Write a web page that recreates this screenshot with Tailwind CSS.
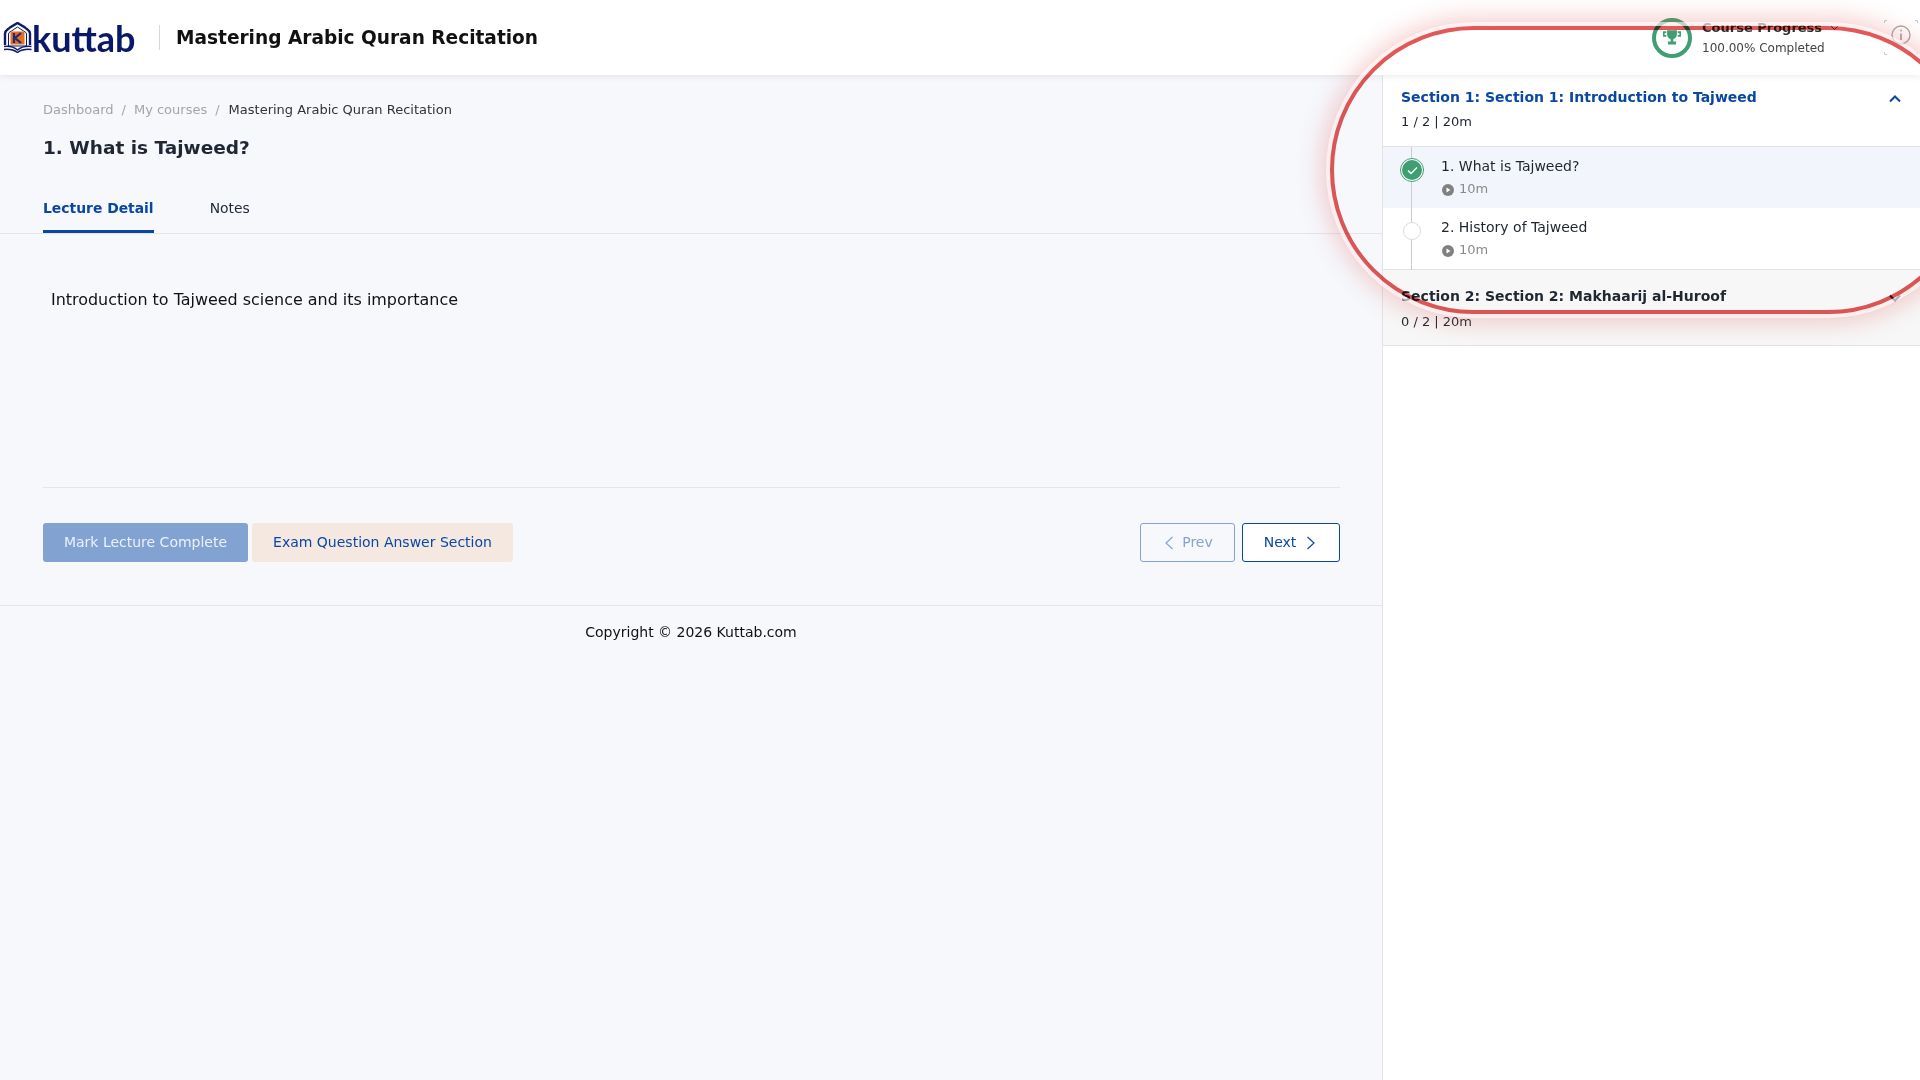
<!DOCTYPE html>
<html lang="en">
<head>
  <meta charset="UTF-8" />
  <title>Mastering Arabic Quran Recitation - Kuttab</title>
  <script src="https://cdn.jsdelivr.net/npm/@tailwindcss/browser@4"></script>
</head>
<body class="relative h-[1080px] overflow-hidden bg-[#f6f8fc] font-['DejaVu_Sans',sans-serif] text-[#1d2530]">
  <!-- top bar -->
  <header class="relative z-10 flex h-[75px] items-center bg-white pl-[3px] shadow-[0_2px_6px_rgba(0,0,0,0.07)]">
    <div class="flex w-[156px] items-center">
      <svg width="30" height="31" viewBox="0 0 30 31" class="shrink-0">
        <path d="M2 23V11.500C2 8.500 5 7.500 7 5.500L14.500 1L22 5.500C24 7.500 27 8.500 27 11.500V23" fill="none" stroke="#0d1b6b" stroke-width="2.400"/>
        <path d="M5.500 24V12C5.500 10 8 9.500 10 8L14.500 5L19 8C21 9.500 23.500 10 23.500 12V24Z" fill="#fff" stroke="#0d1b6b" stroke-width="1"/>
        <rect x="7.500" y="9.500" width="14" height="13" fill="#e2701f"/>
        <path d="M11 11V21M18 11L12 16L18 21" fill="none" stroke="#1d2a7a" stroke-width="2.200"/>
        <path d="M1 24.500C6 24 11 25 14.500 28C18 25 23 24 28.500 24.500M1 27.500C6 27 11 28 14.500 30.500C18 28 23 27 28.500 27.500" fill="none" stroke="#0d1b6b" stroke-width="1.500"/>
      </svg>
      <span class="-ml-px font-['Lato',sans-serif] text-[36px] leading-none font-bold text-[#0a1869]">kuttab</span>
    </div>
    <div class="h-[25px] w-px bg-[#d8d8d8]"></div>
    <h2 class="ml-4 text-[18.560px] font-bold text-[#111]">Mastering Arabic Quran Recitation</h2>
    <div class="ml-auto flex items-center pr-[2px]">
      <div class="flex h-10 w-10 items-center justify-center rounded-full border-4 border-[#3f9f72]">
        <svg width="18" height="15" viewBox="0 0 22 18" fill="#3f9f72">
          <path d="M5 0H17V5C17 9 14 10.500 12.500 11V14H16V17.500H6V14H9.500V11C8 10.500 5 9 5 5Z"/>
          <path d="M0 1.500H4V3.500H2V6H4V8H0ZM18 1.500H22V8H18V6H20V3.500H18Z"/>
        </svg>
      </div>
      <div class="ml-[10px] w-[182px]">
        <div class="flex items-center gap-2 text-[13px] leading-[20px] font-bold text-[#333]">
          Course Progress
          <svg width="9" height="6" viewBox="0 0 9 6" fill="none" stroke="#555" stroke-width="1"><path d="M1 1L4.500 4.500L8 1"/></svg>
        </div>
        <div class="text-[12px] leading-[20px] text-[#444]">100.00% Completed</div>
      </div>
      <div class="relative flex h-[35px] w-[34px] items-center justify-center">
        <span class="absolute top-0 left-0 h-[3px] w-[3px] rounded-tl-[2px] border-t border-l border-[#b9c6dc]"></span>
        <span class="absolute top-0 right-0 h-[3px] w-[3px] rounded-tr-[2px] border-t border-r border-[#b9c6dc]"></span>
        <span class="absolute bottom-0 left-0 h-[3px] w-[3px] rounded-bl-[2px] border-b border-l border-[#b9c6dc]"></span>
        <span class="absolute right-0 bottom-0 h-[3px] w-[3px] rounded-br-[2px] border-r border-b border-[#b9c6dc]"></span>
        <svg width="20" height="20" viewBox="0 0 20 20" fill="none" stroke="#a8a8a8" stroke-width="1.400" class="-translate-y-[3px]">
          <circle cx="10" cy="10" r="9"/>
          <path d="M10 8.500V15" stroke-width="1.800"/>
          <circle cx="10" cy="5.500" r="0.900" fill="#a8a8a8" stroke="none"/>
        </svg>
      </div>
    </div>
  </header>

  <div class="flex h-[1005px]">
    <!-- lecture content -->
    <main class="flex-1">
      <div class="pr-[42px] pl-[43px]">
        <nav class="flex items-center pt-[26px] text-[13px] leading-[18px]">
          <span class="text-[#a5a5a5]">Dashboard</span>
          <span class="mx-2 text-[#a5a5a5]">/</span>
          <span class="text-[#a5a5a5]">My courses</span>
          <span class="mx-2 text-[#a5a5a5]">/</span>
          <span class="ml-px text-[#333]">Mastering Arabic Quran Recitation</span>
        </nav>
        <h1 class="mt-[16px] text-[18.500px] leading-[26px] font-bold text-[#1f2733]">1. What is Tajweed?</h1>
      </div>
      <div class="mt-[26px] flex h-[47px] gap-[56px] border-b border-[#e3e5ea] px-[43px] text-[13.900px]">
        <div class="h-[46px] border-b-[3px] border-[#0a47a5] pt-[11px] font-bold text-[#0a47a5]">Lecture Detail</div>
        <div class="pt-[11px] text-[#1f2733]">Notes</div>
      </div>
      <p class="mt-[54px] pl-[51px] text-[15.950px] leading-[24px] text-[#111]">Introduction to Tajweed science and its importance</p>
      <div class="mt-[175px] mr-[42px] ml-[43px] border-t border-[#e3e5ea]"></div>
      <div class="flex items-center justify-between pt-[35px] pr-[42px] pl-[43px] text-[14px]">
        <div class="flex gap-1">
          <button class="h-[39px] w-[205px] rounded-[3px] bg-[#82a3d1] text-[#eaf0f8]">Mark Lecture Complete</button>
          <button class="h-[39px] w-[261px] rounded-[3px] bg-[#f5e8e1] text-[#0a47a5]">Exam Question Answer Section</button>
        </div>
        <div class="flex gap-[7px]">
          <button class="flex h-[39px] w-[95px] items-center justify-center gap-[8px] rounded-[3px] border border-[#85a3d2] pl-[2px] text-[#85a3d2]">
            <svg width="10" height="14" viewBox="0 0 10 14" fill="none" stroke="currentColor" stroke-width="1.200"><path d="M8.500 1L2 7L8.500 13"/></svg>
            Prev
          </button>
          <button class="flex h-[39px] w-[98px] items-center justify-center gap-[10px] rounded-[3px] border border-[#0a47a5] bg-white pr-[2px] text-[#0a47a5]">
            Next
            <svg width="10" height="14" viewBox="0 0 10 14" fill="none" stroke="currentColor" stroke-width="1.200"><path d="M1.500 1L8 7L1.500 13"/></svg>
          </button>
        </div>
      </div>
      <footer class="mt-[43px] border-t border-[#e3e5ea] pt-[16px] text-center text-[14px] leading-[21px] text-[#111]">Copyright © 2026 Kuttab.com</footer>
    </main>

    <!-- course content sidebar -->
    <aside class="w-[538px] border-l border-[#e3e3e3] bg-white">
      <div class="h-[72px] border-b border-[#e3e3e3] pt-[12px] pr-[19px] pl-[18px]">
        <div class="flex items-center justify-between text-[14px] leading-[20px] font-bold text-[#0a47a5]">
          Section 1: Section 1: Introduction to Tajweed
          <svg width="12" height="8" viewBox="0 0 12 8" fill="none" stroke="#0a47a5" stroke-width="2" class="translate-y-[2px]"><path d="M1 6.500L6 1.500L11 6.500"/></svg>
        </div>
        <div class="mt-[5px] text-[13px] leading-[20px] text-[#1d2530]">1 / 2 | 20m</div>
      </div>
      <div class="relative">
        <div class="absolute top-0 bottom-0 left-[28px] w-px bg-[#c9ccd1]"></div>
        <div class="flex h-[61px] bg-[#f2f5fb] pt-[9px] pl-[17px]">
          <div class="relative flex h-6 w-6 shrink-0 translate-y-[2px] items-center justify-center rounded-full border border-[#3f9f72] bg-white">
            <div class="flex h-[20px] w-[20px] items-center justify-center rounded-full bg-[#3f9f72]">
              <svg width="11" height="9" viewBox="0 0 11 9" fill="none" stroke="#fff" stroke-width="1.300"><path d="M1 4.500L4 7.500L10 1.500"/></svg>
            </div>
          </div>
          <div class="ml-[17px] text-[14px] leading-[20px] text-[#1d2530]">
            1. What is Tajweed?
            <div class="mt-[3px] flex items-center gap-[5px] text-[13px] text-[#8a8a8a]">
              <svg width="12" height="12" viewBox="0 0 12 12" class="ml-px translate-y-[1px]"><circle cx="6" cy="6" r="6" fill="#808080"/><path d="M4.500 3.500L8.500 6L4.500 8.500Z" fill="#fff"/></svg>
              10m
            </div>
          </div>
        </div>
        <div class="flex h-[62px] border-b border-[#e3e3e3] pt-[9px] pl-[20px]">
          <div class="relative mt-[5px] h-[18px] w-[18px] shrink-0 rounded-full border border-[#dcdcdc] bg-white"></div>
          <div class="ml-[20px] text-[14px] leading-[20px] text-[#1d2530]">
            2. History of Tajweed
            <div class="mt-[3px] flex items-center gap-[5px] text-[13px] text-[#8a8a8a]">
              <svg width="12" height="12" viewBox="0 0 12 12" class="ml-px translate-y-[1px]"><circle cx="6" cy="6" r="6" fill="#808080"/><path d="M4.500 3.500L8.500 6L4.500 8.500Z" fill="#fff"/></svg>
              10m
            </div>
          </div>
        </div>
      </div>
      <div class="h-[76px] border-b border-[#e3e3e3] bg-[#f7f7f7] pt-[16px] pr-[19px] pl-[18px]">
        <div class="flex items-center justify-between text-[14px] leading-[20px] font-bold text-[#1f2733]">
          Section 2: Section 2: Makhaarij al-Huroof
          <svg width="12" height="8" viewBox="0 0 12 8" fill="none" stroke="#1f2733" stroke-width="2" class="translate-y-[2px]"><path d="M1 1.500L6 6.500L11 1.500"/></svg>
        </div>
        <div class="mt-[6px] text-[13px] leading-[20px] text-[#1d2530]">0 / 2 | 20m</div>
      </div>
    </aside>
  </div>

  <!-- red annotation ring: soft halo, then the line multiplied over the text -->
  <div class="pointer-events-none absolute top-[26px] left-[1330px] z-20 h-[288px] w-[642px] rounded-[144px] shadow-[0_0_0_4px_rgba(255,255,255,0.6),0_0_24px_8px_rgba(226,87,87,0.3)]"></div>
  <div class="pointer-events-none absolute top-[26px] left-[1330px] z-20 h-[288px] w-[642px] rounded-[144px] border-4 border-[#e25757] mix-blend-multiply"></div>
</body>
</html>
